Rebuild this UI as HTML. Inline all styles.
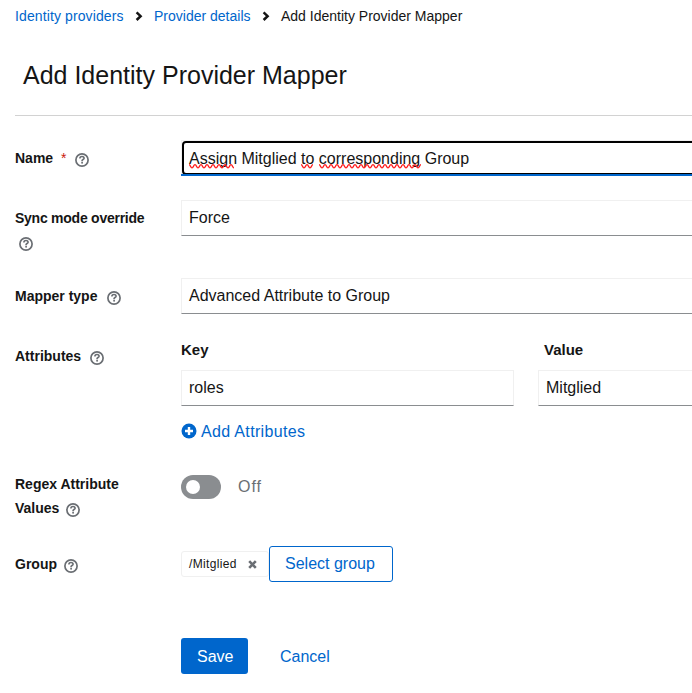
<!DOCTYPE html>
<html><head><meta charset="utf-8">
<style>
html,body{margin:0;padding:0;background:#fff;width:692px;height:693px;overflow:hidden;position:relative;font-family:"Liberation Sans",sans-serif;color:#151515;}
.a{position:absolute;white-space:nowrap;line-height:1;}
.link{color:#0066cc;}
.lbl{font-size:14px;font-weight:bold;}
.inp{position:absolute;height:36px;box-sizing:border-box;border:1px solid #f0f0f0;border-bottom-color:#8a8d90;background:#fff;}
.itxt{font-size:16px;}
.help{position:absolute;width:14px;height:14px;}
</style></head><body>

<!-- breadcrumb -->
<div class="a link" style="left:15px;top:9px;font-size:14px;letter-spacing:0.11px;">Identity providers</div>
<svg class="a" style="left:135px;top:10px" width="8" height="12" viewBox="0 0 8 12"><path d="M1.6 2.4 L5.6 6.2 L1.6 10" fill="none" stroke="#151515" stroke-width="2.5"/></svg>
<div class="a link" style="left:154px;top:9px;font-size:14px;">Provider details</div>
<svg class="a" style="left:262px;top:10px" width="8" height="12" viewBox="0 0 8 12"><path d="M1.6 2.4 L5.6 6.2 L1.6 10" fill="none" stroke="#151515" stroke-width="2.5"/></svg>
<div class="a" style="left:281px;top:9px;font-size:14px;">Add Identity Provider Mapper</div>

<!-- title -->
<div class="a" style="left:23px;top:63px;font-size:25px;">Add Identity Provider Mapper</div>

<!-- divider -->
<div class="a" style="left:15px;top:115px;width:677px;height:1px;background:#d2d2d2;"></div>

<!-- Name -->
<div class="a lbl" style="left:15px;top:151px;">Name</div>
<div class="a" style="left:61px;top:151px;font-size:14px;color:#c9190b;">*</div>
<svg class="help" style="left:75px;top:153px" viewBox="0 0 14 14"><circle cx="7" cy="7" r="6.1" fill="none" stroke="#6a6e73" stroke-width="1.7"/><path d="M4.9 5.4 C4.9 4.1 5.9 3.5 7 3.5 C8.2 3.5 9.1 4.2 9.1 5.2 C9.1 6.4 7.3 6.5 7.1 7.5 V8.3" fill="none" stroke="#6a6e73" stroke-width="1.6"/><circle cx="7.1" cy="9.7" r="0.95" fill="#6a6e73"/></svg>
<div class="inp" style="left:181px;top:140px;width:520px;"></div>
<div class="a" style="left:182px;top:141px;width:520px;height:34px;box-sizing:border-box;border:2px solid #000;border-radius:4px;background:#fff;"></div>
<div class="a" style="left:181px;top:174px;width:520px;height:2px;background:#0066cc;"></div>
<div class="a itxt" style="left:189px;top:151px;">Assign Mitglied to corresponding Group</div>

<svg class="a" style="left:0;top:0.4px" width="692" height="200"><g fill="none" stroke="#ff1a1a" stroke-width="1.4"><path d="M189 164.6 C190.5 164.6 190.5 167.9 192 167.9 C193.5 167.9 193.5 164.6 195 164.6 C196.5 164.6 196.5 167.9 198 167.9 C199.5 167.9 199.5 164.6 201 164.6 C202.5 164.6 202.5 167.9 204 167.9 C205.5 167.9 205.5 164.6 207 164.6 C208.5 164.6 208.5 167.9 210 167.9 C211.5 167.9 211.5 164.6 213 164.6 C214.5 164.6 214.5 167.9 216 167.9 C217.5 167.9 217.5 164.6 219 164.6 C220.5 164.6 220.5 167.9 222 167.9 C223.5 167.9 223.5 164.6 225 164.6 C226.5 164.6 226.5 167.9 228 167.9 C229.5 167.9 229.5 164.6 231 164.6 C232.5 164.6 232.5 167.9 234 167.9"/><path d="M301 164.6 C302.5 164.6 302.5 167.9 304 167.9 C305.5 167.9 305.5 164.6 307 164.6 C308.5 164.6 308.5 167.9 310 167.9 C311.5 167.9 311.5 164.6 313 164.6"/><path d="M319 164.6 C320.5 164.6 320.5 167.9 322 167.9 C323.5 167.9 323.5 164.6 325 164.6 C326.5 164.6 326.5 167.9 328 167.9 C329.5 167.9 329.5 164.6 331 164.6 C332.5 164.6 332.5 167.9 334 167.9 C335.5 167.9 335.5 164.6 337 164.6 C338.5 164.6 338.5 167.9 340 167.9 C341.5 167.9 341.5 164.6 343 164.6 C344.5 164.6 344.5 167.9 346 167.9 C347.5 167.9 347.5 164.6 349 164.6 C350.5 164.6 350.5 167.9 352 167.9 C353.5 167.9 353.5 164.6 355 164.6 C356.5 164.6 356.5 167.9 358 167.9 C359.5 167.9 359.5 164.6 361 164.6 C362.5 164.6 362.5 167.9 364 167.9 C365.5 167.9 365.5 164.6 367 164.6 C368.5 164.6 368.5 167.9 370 167.9 C371.5 167.9 371.5 164.6 373 164.6 C374.5 164.6 374.5 167.9 376 167.9 C377.5 167.9 377.5 164.6 379 164.6 C380.5 164.6 380.5 167.9 382 167.9 C383.5 167.9 383.5 164.6 385 164.6 C386.5 164.6 386.5 167.9 388 167.9 C389.5 167.9 389.5 164.6 391 164.6 C392.5 164.6 392.5 167.9 394 167.9 C395.5 167.9 395.5 164.6 397 164.6 C398.5 164.6 398.5 167.9 400 167.9 C401.5 167.9 401.5 164.6 403 164.6 C404.5 164.6 404.5 167.9 406 167.9 C407.5 167.9 407.5 164.6 409 164.6 C410.5 164.6 410.5 167.9 412 167.9 C413.5 167.9 413.5 164.6 415 164.6 C416.5 164.6 416.5 167.9 418 167.9 C419.5 167.9 419.5 164.6 421 164.6"/></g></svg>
<!-- Sync mode -->
<div class="a lbl" style="left:15px;top:211px;letter-spacing:-0.25px;">Sync mode override</div>
<svg class="help" style="left:19px;top:237px" viewBox="0 0 14 14"><circle cx="7" cy="7" r="6.1" fill="none" stroke="#6a6e73" stroke-width="1.7"/><path d="M4.9 5.4 C4.9 4.1 5.9 3.5 7 3.5 C8.2 3.5 9.1 4.2 9.1 5.2 C9.1 6.4 7.3 6.5 7.1 7.5 V8.3" fill="none" stroke="#6a6e73" stroke-width="1.6"/><circle cx="7.1" cy="9.7" r="0.95" fill="#6a6e73"/></svg>
<div class="inp" style="left:181px;top:200px;width:520px;"></div>
<div class="a itxt" style="left:189px;top:210px;">Force</div>

<!-- Mapper type -->
<div class="a lbl" style="left:15px;top:289px;">Mapper type</div>
<svg class="help" style="left:107px;top:291px" viewBox="0 0 14 14"><circle cx="7" cy="7" r="6.1" fill="none" stroke="#6a6e73" stroke-width="1.7"/><path d="M4.9 5.4 C4.9 4.1 5.9 3.5 7 3.5 C8.2 3.5 9.1 4.2 9.1 5.2 C9.1 6.4 7.3 6.5 7.1 7.5 V8.3" fill="none" stroke="#6a6e73" stroke-width="1.6"/><circle cx="7.1" cy="9.7" r="0.95" fill="#6a6e73"/></svg>
<div class="inp" style="left:181px;top:278px;width:520px;"></div>
<div class="a itxt" style="left:189px;top:288px;">Advanced Attribute to Group</div>

<!-- Attributes -->
<div class="a lbl" style="left:15px;top:349px;">Attributes</div>
<svg class="help" style="left:90px;top:351px" viewBox="0 0 14 14"><circle cx="7" cy="7" r="6.1" fill="none" stroke="#6a6e73" stroke-width="1.7"/><path d="M4.9 5.4 C4.9 4.1 5.9 3.5 7 3.5 C8.2 3.5 9.1 4.2 9.1 5.2 C9.1 6.4 7.3 6.5 7.1 7.5 V8.3" fill="none" stroke="#6a6e73" stroke-width="1.6"/><circle cx="7.1" cy="9.7" r="0.95" fill="#6a6e73"/></svg>
<div class="a" style="left:181px;top:342px;font-size:15px;font-weight:bold;">Key</div>
<div class="a" style="left:544px;top:342px;font-size:15px;font-weight:bold;">Value</div>
<div class="inp" style="left:181px;top:370px;width:333px;"></div>
<div class="a itxt" style="left:189px;top:380px;">roles</div>
<div class="inp" style="left:538px;top:370px;width:333px;"></div>
<div class="a itxt" style="left:546px;top:380px;">Mitglied</div>
<svg class="a" style="left:181px;top:423px" width="16" height="16" viewBox="0 0 16 16"><circle cx="8" cy="8" r="7.5" fill="#0066cc"/><path d="M8 4 V12 M4 8 H12" stroke="#fff" stroke-width="2.4"/></svg>
<div class="a link" style="left:201px;top:424px;font-size:16px;letter-spacing:0.33px;">Add Attributes</div>

<!-- Regex -->
<div class="a lbl" style="left:15px;top:477px;">Regex Attribute</div>
<div class="a lbl" style="left:15px;top:501px;">Values</div>
<svg class="help" style="left:66px;top:503px" viewBox="0 0 14 14"><circle cx="7" cy="7" r="6.1" fill="none" stroke="#6a6e73" stroke-width="1.7"/><path d="M4.9 5.4 C4.9 4.1 5.9 3.5 7 3.5 C8.2 3.5 9.1 4.2 9.1 5.2 C9.1 6.4 7.3 6.5 7.1 7.5 V8.3" fill="none" stroke="#6a6e73" stroke-width="1.6"/><circle cx="7.1" cy="9.7" r="0.95" fill="#6a6e73"/></svg>
<div class="a" style="left:181px;top:475px;width:40px;height:24px;border-radius:12px;background:#8a8d90;"></div>
<div class="a" style="left:186px;top:480px;width:14px;height:14px;border-radius:50%;background:#fff;"></div>
<div class="a" style="left:238px;top:479px;font-size:16px;color:#6a6e73;letter-spacing:1px;">Off</div>

<!-- Group -->
<div class="a lbl" style="left:15px;top:557px;">Group</div>
<svg class="help" style="left:64px;top:559px" viewBox="0 0 14 14"><circle cx="7" cy="7" r="6.1" fill="none" stroke="#6a6e73" stroke-width="1.7"/><path d="M4.9 5.4 C4.9 4.1 5.9 3.5 7 3.5 C8.2 3.5 9.1 4.2 9.1 5.2 C9.1 6.4 7.3 6.5 7.1 7.5 V8.3" fill="none" stroke="#6a6e73" stroke-width="1.6"/><circle cx="7.1" cy="9.7" r="0.95" fill="#6a6e73"/></svg>
<div class="a" style="left:181px;top:551px;width:88px;height:26px;box-sizing:border-box;border:1px solid #f0f0f0;border-radius:3px;"></div>
<div class="a" style="left:189px;top:558px;font-size:12px;letter-spacing:0.35px;">/Mitglied</div>
<svg class="a" style="left:248px;top:560px" width="9" height="9" viewBox="0 0 9 9"><path d="M1.2 1.2 L7.8 7.8 M7.8 1.2 L1.2 7.8" stroke="#6a6e73" stroke-width="2.6"/></svg>
<div class="a" style="left:269px;top:546px;width:124px;height:36px;box-sizing:border-box;border:1px solid #0066cc;border-radius:3px;"></div>
<div class="a link" style="left:285px;top:556px;font-size:16px;">Select group</div>

<!-- buttons -->
<div class="a" style="left:181px;top:638px;width:67px;height:36px;border-radius:3px;background:#0066cc;"></div>
<div class="a" style="left:197px;top:649px;font-size:16px;color:#fff;">Save</div>
<div class="a link" style="left:280px;top:649px;font-size:16px;">Cancel</div>

</body></html>
